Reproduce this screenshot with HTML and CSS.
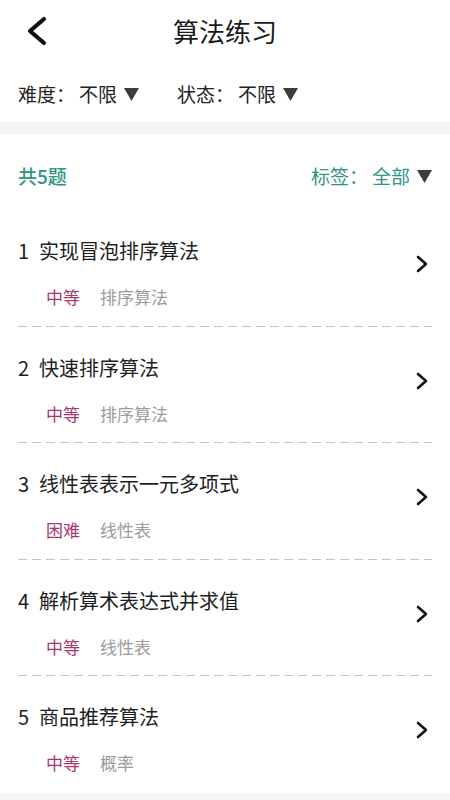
FILE: index.html
```html
<!DOCTYPE html>
<html lang="zh-CN">
<head>
<meta charset="utf-8">
<title>算法练习</title>
<link rel="stylesheet" href="styles.css">
</head>
<body>
<div class="page">
  <header class="topbar">
    <svg class="back" width="24" height="30" viewBox="0 0 24 30"><polyline points="19,3 5,15 19,27" fill="none" stroke="#111" stroke-width="4.2" stroke-linecap="round" stroke-linejoin="round"/></svg>
    <h1 class="title">算法练习</h1>
  </header>
  <div class="filters">
    <div class="filter">难度：<span class="val">不限</span><svg class="tri" width="15" height="13" viewBox="0 0 15 13"><polygon points="0,0 15,0 7.5,13" fill="#3c3c3c"/></svg></div>
    <div class="filter">状态：<span class="val">不限</span><svg class="tri" width="15" height="13" viewBox="0 0 15 13"><polygon points="0,0 15,0 7.5,13" fill="#3c3c3c"/></svg></div>
  </div>
  <div class="band"></div>
  <div class="countrow">
    <span class="count">共5题</span>
    <span class="tagfilter">标签：<span class="val">全部</span><svg class="tri" width="15" height="13" viewBox="0 0 15 13"><polygon points="0,0 15,0 7.5,13" fill="#3c3c3c"/></svg></span>
  </div>
  <ul class="list">
    <li class="item">
      <div class="info">
        <div class="name"><span class="num">1</span>实现冒泡排序算法</div>
        <div class="tags"><span class="level">中等</span><span class="cat">排序算法</span></div>
      </div>
      <svg class="go" width="14" height="18" viewBox="0 0 14 18"><polyline points="3,2 11,9 3,16" fill="none" stroke="#111" stroke-width="2.6" stroke-linecap="round" stroke-linejoin="round"/></svg>
    </li>
    <li class="item">
      <div class="info">
        <div class="name"><span class="num">2</span>快速排序算法</div>
        <div class="tags"><span class="level">中等</span><span class="cat">排序算法</span></div>
      </div>
      <svg class="go" width="14" height="18" viewBox="0 0 14 18"><polyline points="3,2 11,9 3,16" fill="none" stroke="#111" stroke-width="2.6" stroke-linecap="round" stroke-linejoin="round"/></svg>
    </li>
    <li class="item">
      <div class="info">
        <div class="name"><span class="num">3</span>线性表表示一元多项式</div>
        <div class="tags"><span class="level">困难</span><span class="cat">线性表</span></div>
      </div>
      <svg class="go" width="14" height="18" viewBox="0 0 14 18"><polyline points="3,2 11,9 3,16" fill="none" stroke="#111" stroke-width="2.6" stroke-linecap="round" stroke-linejoin="round"/></svg>
    </li>
    <li class="item">
      <div class="info">
        <div class="name"><span class="num">4</span>解析算术表达式并求值</div>
        <div class="tags"><span class="level">中等</span><span class="cat">线性表</span></div>
      </div>
      <svg class="go" width="14" height="18" viewBox="0 0 14 18"><polyline points="3,2 11,9 3,16" fill="none" stroke="#111" stroke-width="2.6" stroke-linecap="round" stroke-linejoin="round"/></svg>
    </li>
    <li class="item last">
      <div class="info">
        <div class="name"><span class="num">5</span>商品推荐算法</div>
        <div class="tags"><span class="level">中等</span><span class="cat">概率</span></div>
      </div>
      <svg class="go" width="14" height="18" viewBox="0 0 14 18"><polyline points="3,2 11,9 3,16" fill="none" stroke="#111" stroke-width="2.6" stroke-linecap="round" stroke-linejoin="round"/></svg>
    </li>
  </ul>
  <div class="footer-band"></div>
</div>
</body>
</html>
```

FILE: styles.css
```css
html, body {
  margin: 0;
  padding: 0;
  background: #ffffff;
}
body {
  font-family: "Noto Sans CJK SC", "Noto Sans", sans-serif;
  color: #222;
}
.page {
  width: 450px;
  min-height: 800px;
  display: flex;
  flex-direction: column;
}
.topbar {
  height: 66px;
  box-sizing: border-box;
  padding-bottom: 4px;
  position: relative;
  display: flex;
  align-items: center;
  justify-content: center;
}
.back {
  position: absolute;
  left: 25px;
  top: 16px;
}
.title {
  margin: 0;
  font-size: 26px;
  font-weight: 400;
  color: #1a1a1a;
  line-height: 32px;
}
.filters {
  display: flex;
  gap: 38px;
  padding: 15px 18px 15px;
  font-size: 19px;
  line-height: 26px;
}
.filter, .tagfilter {
  display: flex;
  align-items: center;
}
.val {
  margin-left: 4px;
}
.tri {
  margin-left: 7px;
}
.band {
  height: 12px;
  background: #f5f5f5;
}
.countrow {
  display: flex;
  justify-content: space-between;
  align-items: center;
  padding: 29px 18px 21px;
  font-size: 19px;
  line-height: 26px;
  color: #2e9484;
}
.count {
  font-weight: 500;
}
.list {
  list-style: none;
  margin: 0;
  padding: 0;
}
.item {
  display: flex;
  align-items: center;
  margin: 0 18px 0 18px;
  background-image: repeating-linear-gradient(to right, #c4c4c4 0 9px, transparent 9px 14px);
  background-size: 100% 1px;
  background-position: left bottom;
  background-repeat: no-repeat;
  padding-bottom: 1px;
}
.item.last {
  background-image: none;
}
.info {
  flex: 1;
  padding: 29px 0 17.5px;
}
.name {
  font-size: 20px;
  line-height: 24px;
  color: #1e1e1e;
}
.num {
  margin-right: 10px;
}
.tags {
  margin-top: 23px;
  padding-left: 28px;
  font-size: 17px;
  line-height: 22px;
  display: flex;
  gap: 20px;
}
.level {
  color: #a8366e;
}
.cat {
  color: #9c9c9c;
}
.go {
  margin-right: 3px;
  margin-top: -7px;
}
.footer-band {
  flex: 1;
  background: #f5f5f5;
}
```
